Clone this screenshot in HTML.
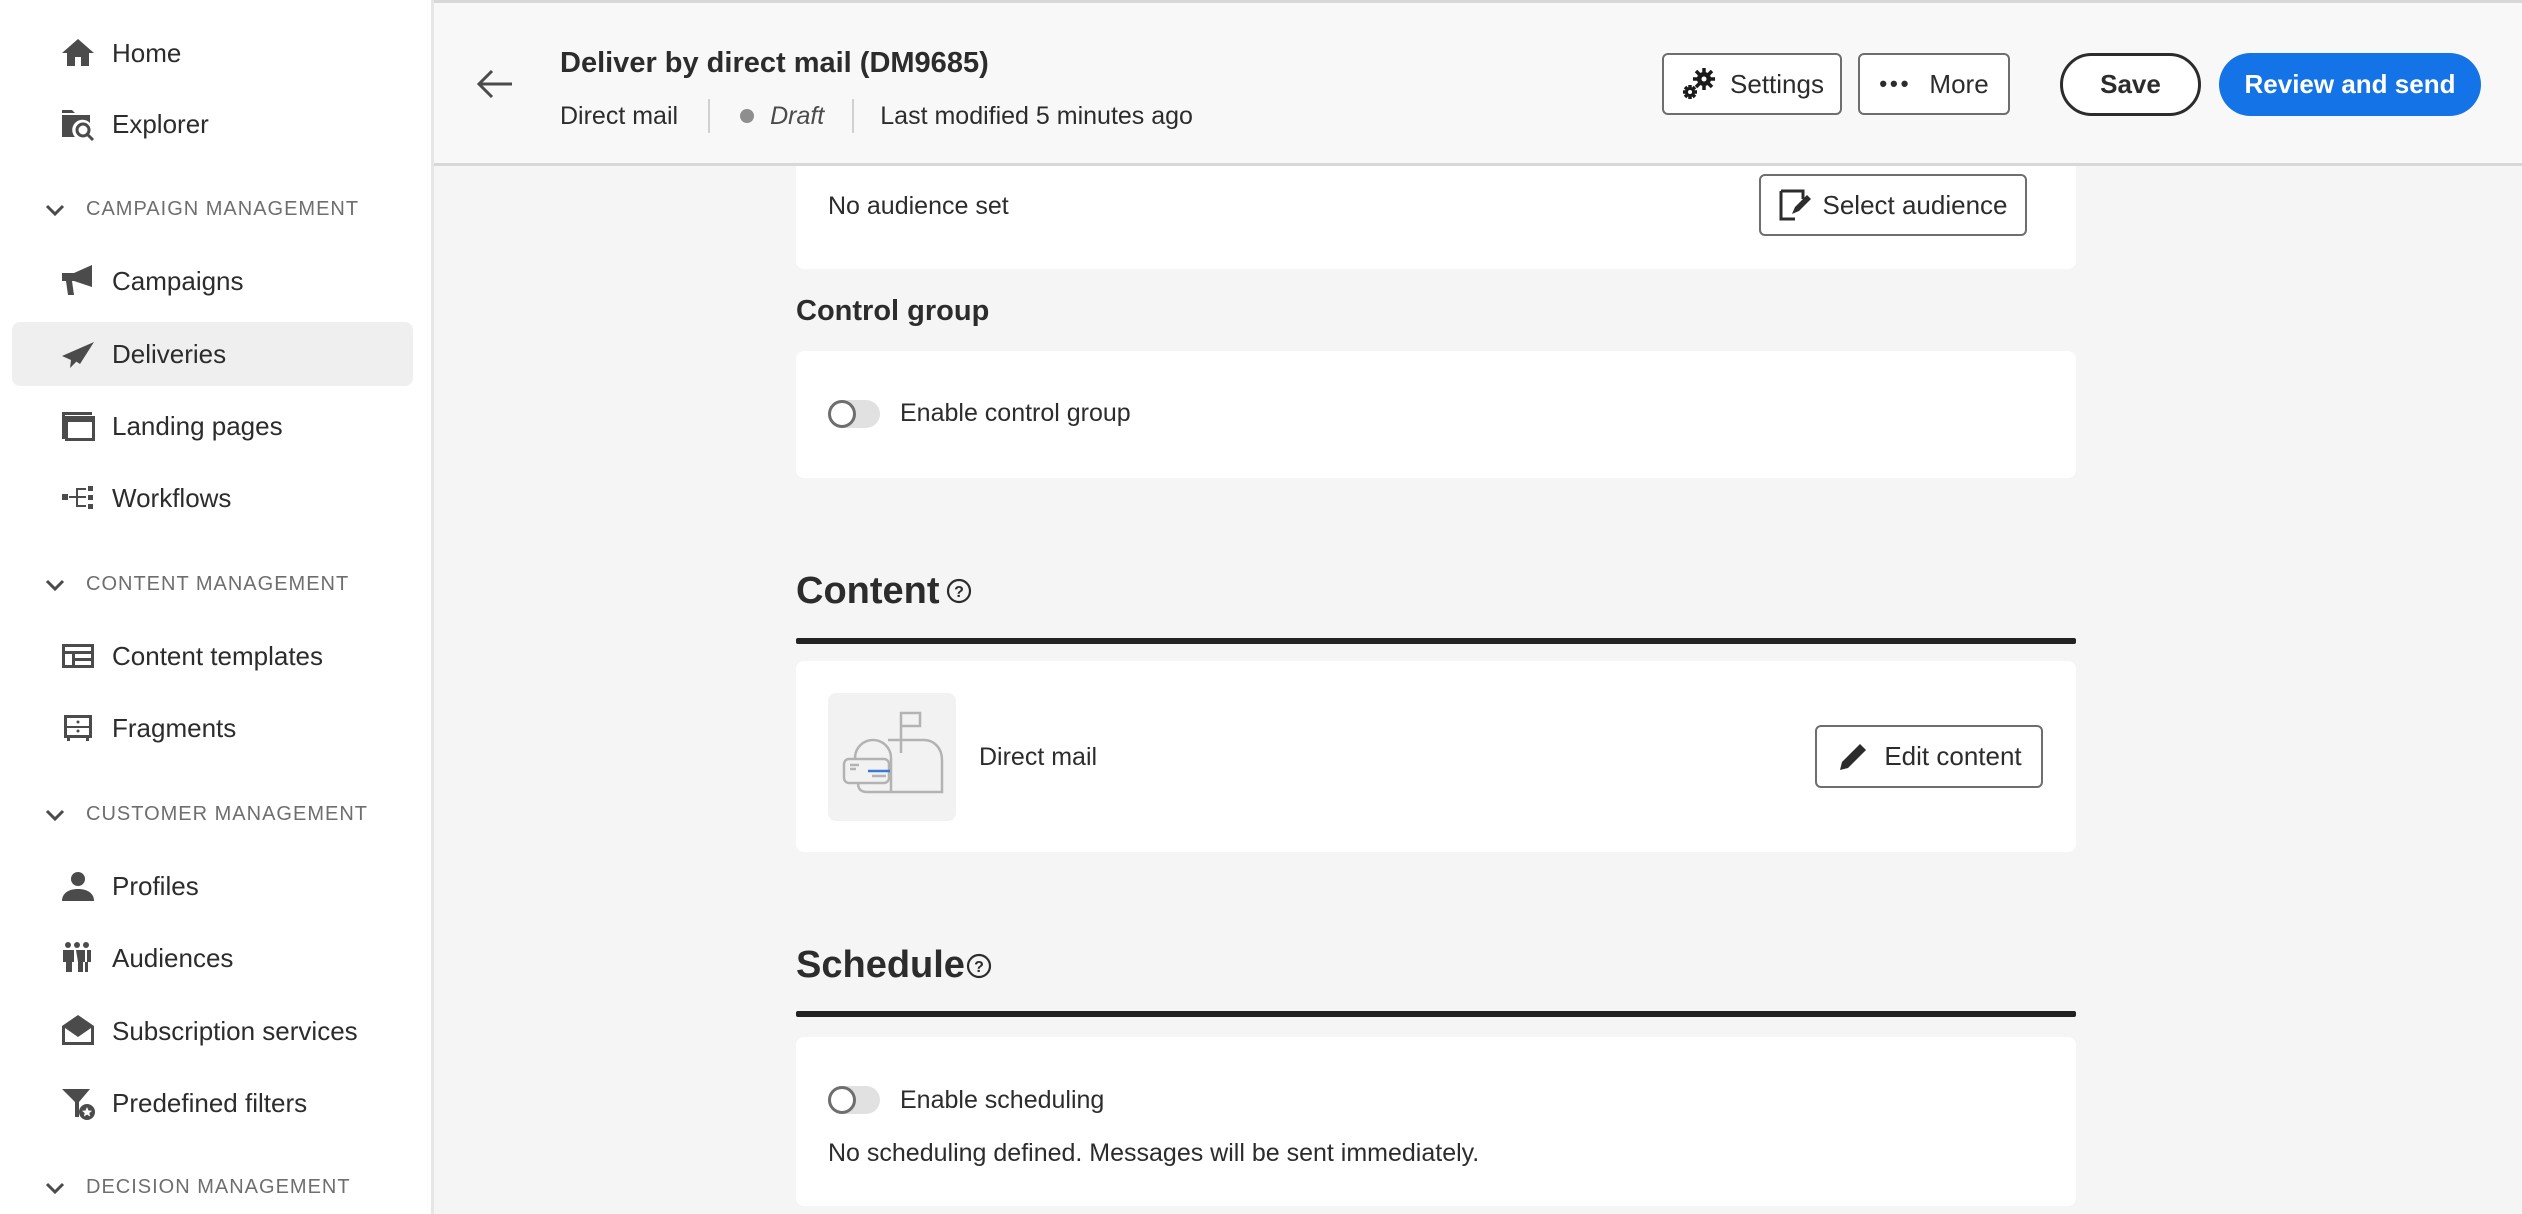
<!DOCTYPE html>
<html><head><meta charset="utf-8"><style>
*{margin:0;padding:0;box-sizing:border-box}
body{width:2522px;height:1214px;overflow:hidden;background:#f5f5f5;font-family:"Liberation Sans",sans-serif;color:#2c2c2c;position:relative}
.abs{position:absolute}
#side{left:0;top:0;width:434px;height:1214px;background:#fff;border-right:3px solid #e6e6e6}
.item{position:absolute;left:12px;width:401px;height:64px;border-radius:8px;font-size:26px;color:#2c2c2c;display:flex;align-items:center}
.item svg{position:absolute;left:48px;width:36px;height:36px;fill:#4b4b4b}
.item span{position:absolute;left:100px}
.sec{position:absolute;left:44px;font-size:20px;letter-spacing:1px;color:#6e6e6e;display:flex;align-items:center}
.sec svg{width:22px;height:22px;margin-right:20px}
#top{left:434px;top:0;width:2088px;height:166px;background:#f8f8f8;border-bottom:3px solid #d8d8d8;border-top:3px solid #d8d8d8}
.btn{position:absolute;border:2px solid #6e6e6e;border-radius:6px;background:#fff;font-size:26px;display:flex;align-items:center;justify-content:center;color:#2c2c2c}
.card{position:absolute;left:796px;width:1280px;background:#fff;border-radius:8px}
.h2{position:absolute;left:796px;font-weight:bold;color:#2c2c2c}
.rule{position:absolute;left:796px;width:1280px;height:6px;background:#222;border-radius:2px}
.txt{position:absolute;font-size:25px;color:#2c2c2c}
.tog{position:absolute;width:52px;height:28px;border-radius:14px;background:#e1e1e1}
.tog::after{content:"";position:absolute;left:0;top:0;width:28px;height:28px;border-radius:50%;border:3px solid #6e6e6e;background:#fff;box-sizing:border-box}
</style></head><body>
<div id="side" class="abs">
 <div class="item" style="top:21px"><svg viewBox="0 0 36 36"><path d="M18 4 2 18h5v13h8v-9h6v9h8V18h5z"/></svg><span>Home</span></div>
 <div class="item" style="top:92px"><svg viewBox="0 0 36 36"><path d="M2 4h10l3 3h-13zM2 9h28v8a10 10 0 0 0-15 14H2z"/><circle cx="23" cy="24" r="6" fill="none" stroke="#4b4b4b" stroke-width="3"/><path d="M27 28l6 6" stroke="#4b4b4b" stroke-width="3"/></svg><span>Explorer</span></div>
 <div class="sec" style="top:198px"><svg viewBox="0 0 22 22"><path d="M3 7l8 8 8-8" fill="none" stroke="#4b4b4b" stroke-width="3"/></svg>CAMPAIGN MANAGEMENT</div>
 <div class="item" style="top:249px"><svg viewBox="0 0 36 36"><path d="M2 10h12l18-8v22L14 18H2zM6 18h6l2 14H8z"/></svg><span>Campaigns</span></div>
 <div class="item" style="top:322px;background:#efefef"><svg viewBox="0 0 36 36"><path d="M2 20 34 6 16 26l-6 6 1-8zM14 24l20-18-14 22z"/></svg><span>Deliveries</span></div>
 <div class="item" style="top:394px"><svg viewBox="0 0 36 36"><path d="M2 4h30v3H5v24H2z"/><rect x="6.5" y="9.5" width="27" height="22" fill="none" stroke="#4b4b4b" stroke-width="3"/><path d="M6 9h28v5H6z"/></svg><span>Landing pages</span></div>
 <div class="item" style="top:466px"><svg viewBox="0 0 36 36"><path d="M2 14h6v6H2zM28 6h5v5h-5zM28 15h5v5h-5zM28 24h5v5h-5zM16 8h10v2h-8v6h8v2h-8v7h8v2H16v-9h-7v-2h7z"/></svg><span>Workflows</span></div>
 <div class="sec" style="top:573px"><svg viewBox="0 0 22 22"><path d="M3 7l8 8 8-8" fill="none" stroke="#4b4b4b" stroke-width="3"/></svg>CONTENT MANAGEMENT</div>
 <div class="item" style="top:624px"><svg viewBox="0 0 36 36"><path d="M2 6h32v24H2zM5 9v4h26V9zM5 16v11h7V16zM15 16v4h16v-4zM15 23v4h16v-4z" fill-rule="evenodd"/></svg><span>Content templates</span></div>
 <div class="item" style="top:696px"><svg viewBox="0 0 36 36"><path d="M4 5h28v23h-3v3h-3v-3H10v3H7v-3H4zM7 8v8h22V8zM7 18v7h22v-7z" fill-rule="evenodd"/><circle cx="18" cy="12" r="1.5"/><circle cx="18" cy="21" r="1.5"/></svg><span>Fragments</span></div>
 <div class="sec" style="top:803px"><svg viewBox="0 0 22 22"><path d="M3 7l8 8 8-8" fill="none" stroke="#4b4b4b" stroke-width="3"/></svg>CUSTOMER MANAGEMENT</div>
 <div class="item" style="top:854px"><svg viewBox="0 0 36 36"><circle cx="18" cy="11" r="7"/><path d="M2 33c0-8 7-12 16-12s16 4 16 12z"/></svg><span>Profiles</span></div>
 <div class="item" style="top:926px"><svg viewBox="0 0 36 36"><circle cx="8" cy="5" r="3"/><circle cx="17" cy="5" r="3"/><circle cx="26" cy="5" r="3"/><path d="M3 10h11v12h-2v10H6V22H3zM16 10h9v12h-2v10h-5V22zM27 10h4v12h-3v10h-3V22h2z"/></svg><span>Audiences</span></div>
 <div class="item" style="top:999px"><svg viewBox="0 0 36 36"><path d="M18 2 2 13v19h32V13zM5 15l13 9 13-9v14H5z" fill-rule="evenodd"/><path d="M10 12h16v3H10zM13 17h10v2H13z"/></svg><span>Subscription services</span></div>
 <div class="item" style="top:1071px"><svg viewBox="0 0 36 36"><path d="M2 4h28L19 17v15h-4V17z"/><circle cx="27" cy="27" r="8"/><path d="M27 22l1.5 3.5 3.5.3-2.7 2.3.9 3.4-3.2-1.9-3.2 1.9.9-3.4-2.7-2.3 3.5-.3z" fill="#fff"/></svg><span>Predefined filters</span></div>
 <div class="sec" style="top:1176px"><svg viewBox="0 0 22 22"><path d="M3 7l8 8 8-8" fill="none" stroke="#4b4b4b" stroke-width="3"/></svg>DECISION MANAGEMENT</div>
</div>

<div class="card" style="top:150px;height:119px"></div>
<div id="top" class="abs"></div>
<svg class="abs" style="left:476px;top:68px" width="38" height="32" viewBox="0 0 38 32"><path d="M36 16H4M16 3 3 16l13 13" fill="none" stroke="#4b4b4b" stroke-width="3"/></svg>
<div class="abs" style="left:560px;top:47px;font-size:29px;font-weight:bold">Deliver by direct mail (DM9685)</div>
<div class="abs" style="left:560px;top:101px;font-size:25px;display:flex;align-items:center;height:30px">Direct mail<span style="display:inline-block;width:2px;height:34px;background:#d0d0d0;margin:0 30px 0 30px"></span><span style="display:inline-block;width:14px;height:14px;border-radius:50%;background:#8e8e8e;margin-right:16px"></span><i style="color:#4b4b4b">Draft</i><span style="display:inline-block;width:2px;height:34px;background:#d0d0d0;margin:0 26px 0 28px"></span>Last modified 5 minutes ago</div>
<div class="btn" style="left:1662px;top:53px;width:180px;height:62px"><svg width="40" height="34" viewBox="0 0 40 34" style="margin-right:10px"><g fill="#1b1b1b"><circle cx="24" cy="12" r="7"/><circle cx="10" cy="25" r="5"/></g><g stroke="#1b1b1b" stroke-width="3.5"><path d="M24 1v22M13 12h22M16 4l16 16M32 4 16 20"/><path d="M10 18v14M3 25h14M5 20l10 10M15 20 5 30"/></g><circle cx="24" cy="12" r="2.5" fill="#fff"/><circle cx="10" cy="25" r="2" fill="#fff"/></svg>Settings</div>
<div class="btn" style="left:1858px;top:53px;width:152px;height:62px"><span style="letter-spacing:3px;font-weight:bold;margin-right:18px;font-size:22px">•••</span>More</div>
<div class="btn" style="left:2060px;top:53px;width:141px;height:63px;border-radius:32px;border:3px solid #2c2c2c;font-weight:bold">Save</div>
<div class="btn" style="left:2219px;top:53px;width:262px;height:63px;border-radius:32px;border:none;background:#1473e6;color:#fff;font-weight:bold">Review and send</div>

<div class="txt" style="left:828px;top:192px">No audience set</div>
<div class="btn" style="left:1759px;top:174px;width:268px;height:62px"><svg width="34" height="34" viewBox="0 0 34 34" style="margin-right:10px"><path d="M3 3h22v8M3 3v28h14" fill="none" stroke="#2c2c2c" stroke-width="3"/><path d="M14 26l3-7L29 7l4 4-12 12z" fill="#2c2c2c"/></svg>Select audience</div>

<div class="h2" style="top:295px;font-size:29px">Control group</div>
<div class="card" style="top:351px;height:127px"></div>
<div class="tog" style="left:828px;top:400px"></div>
<div class="txt" style="left:900px;top:399px">Enable control group</div>

<div class="h2" style="top:570px;font-size:38px">Content</div>
<svg class="abs" style="left:946px;top:578px" width="26" height="26" viewBox="0 0 26 26"><circle cx="13" cy="13" r="11" fill="none" stroke="#2c2c2c" stroke-width="2.2"/><text x="13" y="19" font-size="16" text-anchor="middle" font-family="Liberation Sans" font-weight="bold" fill="#2c2c2c">?</text></svg>
<div class="rule" style="top:638px"></div>
<div class="card" style="top:661px;height:191px"></div>
<div class="abs" style="left:828px;top:693px;width:128px;height:128px;background:#f2f2f2;border-radius:8px">
<svg width="128" height="128" viewBox="0 0 128 128"><g fill="none" stroke="#b3b3b3" stroke-width="2.5"><path d="M73 60V20h19v13H74"/><path d="M60 47h36c10 0 18 8 18 20v32H40c-8 0-10-3-10-10"/><path d="M63 99V65c0-10-8-18-18-18s-18 8-18 18"/><rect x="16" y="66" width="45" height="24" rx="5"/><path d="M22 72h9M22 76h6M44 83h14"/></g><path d="M40 78h22" stroke="#3d78d8" stroke-width="2.5"/></svg></div>
<div class="txt" style="left:979px;top:743px">Direct mail</div>
<div class="btn" style="left:1815px;top:725px;width:228px;height:63px"><svg width="34" height="34" viewBox="0 0 34 34" style="margin-right:14px"><path d="M4 30l2-8L24 4l6 6-18 18z" fill="#2c2c2c"/></svg>Edit content</div>

<div class="h2" style="top:944px;font-size:38px">Schedule</div>
<svg class="abs" style="left:966px;top:953px" width="26" height="26" viewBox="0 0 26 26"><circle cx="13" cy="13" r="11" fill="none" stroke="#2c2c2c" stroke-width="2.2"/><text x="13" y="19" font-size="16" text-anchor="middle" font-family="Liberation Sans" font-weight="bold" fill="#2c2c2c">?</text></svg>
<div class="rule" style="top:1011px"></div>
<div class="card" style="top:1037px;height:169px"></div>
<div class="tog" style="left:828px;top:1086px"></div>
<div class="txt" style="left:900px;top:1086px">Enable scheduling</div>
<div class="txt" style="left:828px;top:1139px">No scheduling defined. Messages will be sent immediately.</div>
</body></html>
